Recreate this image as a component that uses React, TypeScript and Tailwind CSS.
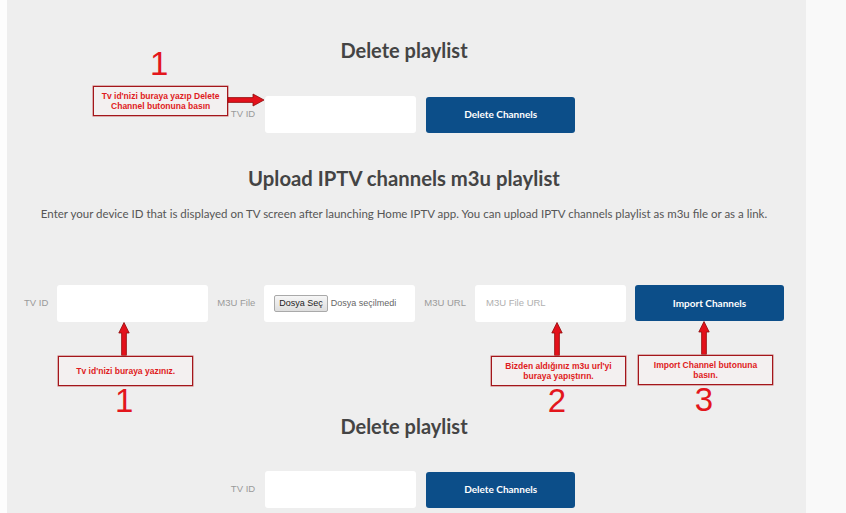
import type { ReactNode } from "react";

const lato = "font-['Lato','Noto_Sans',sans-serif]";
const arial = "font-['Liberation_Sans','Arial',sans-serif]";

function UpArrow() {
  return (
    <svg width="12" height="34" viewBox="0 0 12 34" className="block">
      <polygon points="6,0.5 11.2,11 8.4,11 8.4,33.5 3.6,33.5 3.6,11 0.8,11" fill="#e3111b" stroke="#8e0b0b" strokeWidth="0.8" />
    </svg>
  );
}

function RightArrow() {
  return (
    <svg width="37" height="14" viewBox="0 0 37 14" className="block">
      <polygon points="0,4.6 25,4.6 25,1 36,7 25,13 25,9.4 0,9.4" fill="#e3111b" stroke="#8e0b0b" strokeWidth="0.8" />
    </svg>
  );
}

function NoteBox({ children }: { children: ReactNode }) {
  return (
    <div className={`flex h-[30px] w-[135px] flex-col items-center justify-center border border-[#a3161b] bg-[#f3f0f0] text-center text-[8.5px] font-bold leading-[10px] text-[#df1b22] shadow-[0_0_0_0.5px_#c86a6a] ${arial}`}>
      {children}
    </div>
  );
}

function Digit({ n }: { n: string }) {
  return <div className={`text-[33px] leading-[28px] text-[#e3161c] ${arial}`}>{n}</div>;
}

function Callout({ n, left, children }: { n: string; left: string; children: ReactNode }) {
  return (
    <div className={`absolute top-full ${left} flex w-[135px] flex-col items-center pr-[3px]`}>
      <UpArrow />
      <div className="pl-[3px]">
        <NoteBox>{children}</NoteBox>
      </div>
      <div className="mt-[1px]">
        <Digit n={n} />
      </div>
    </div>
  );
}

function Label({ children }: { children: ReactNode }) {
  return <span className={`text-[9.5px] text-[#9a9a9a] ${arial}`}>{children}</span>;
}

function Input({ placeholder }: { placeholder?: string }) {
  return (
    <div className={`flex h-[37px] w-[151px] items-center rounded-[3px] bg-white pl-[11px] text-[9.5px] text-[#b0b0b0] ${arial}`}>
      {placeholder}
    </div>
  );
}

function BlueButton({ label }: { label: string }) {
  return (
    <div className={`flex h-[36px] w-[149px] items-center justify-center rounded-[3px] bg-[#0c4e89] text-[10px] font-bold text-white ${lato}`}>
      {label}
    </div>
  );
}

function Title({ children }: { children: ReactNode }) {
  return <h2 className={`text-center text-[20px] font-bold leading-6 text-[#444] ${lato}`}>{children}</h2>;
}

function DeleteRow({ note }: { note?: boolean }) {
  return (
    <div className="flex items-center justify-center gap-[10px] pr-[2px]">
      <Label>TV ID</Label>
      <div className="relative">
        <Input />
        {note && (
          <>
            <div className="absolute left-[-106px] top-[-48px] -translate-x-1/2">
              <div className={`text-[33px] leading-8 text-[#e3161c] ${arial}`}>1</div>
            </div>
            <div className="absolute left-[-172px] top-[-10px]">
              <NoteBox>
                <span>Tv id'nizi buraya yazıp Delete</span>
                <span>Channel butonuna basın</span>
              </NoteBox>
            </div>
            <div className="absolute left-[-37px] top-[-3px]">
              <RightArrow />
            </div>
          </>
        )}
      </div>
      <BlueButton label="Delete Channels" />
    </div>
  );
}

export default function App() {
  return (
    <div className="flex h-[513px] w-full overflow-hidden bg-[#f9f9f9]">
      <div className="w-[7px] bg-[#fdfdfd]" />
      <div className="flex w-[799px] flex-col bg-[#eeeeee] pr-[5px] pt-[38px]">
        <Title>Delete playlist</Title>
        <div className="mt-[34px]">
          <DeleteRow note />
        </div>

        <div className="mt-[33px]">
          <h2 className={`text-center text-[20.3px] font-bold leading-6 text-[#444] ${lato}`}>Upload IPTV channels m3u playlist</h2>
        </div>
        <p className={`mt-[16px] text-center text-[11.5px] leading-4 text-[#555] ${lato}`}>
          Enter your device ID that is displayed on TV screen after launching Home IPTV app. You can upload IPTV channels playlist as m3u file or as a link.
        </p>

        <div className="mt-[63px] flex h-[129px] items-start justify-center gap-[9px]">
          <div className="flex h-[37px] items-center">
            <Label>TV ID</Label>
          </div>
          <div className="relative">
            <Input />
            <Callout n="1" left="left-[1px]">
              <span>Tv id'nizi buraya yazınız.</span>
            </Callout>
          </div>
          <div className="flex h-[37px] items-center">
            <Label>M3U File</Label>
          </div>
          <div className={`flex h-[37px] w-[151px] items-center gap-[3px] rounded-[3px] bg-white pl-[10px] text-[9px] ${arial}`}>
            <span className="flex h-[17px] items-center rounded-[2px] border border-[#a9a9a9] bg-gradient-to-b from-[#f6f6f6] to-[#dedede] px-[4px] text-[#222]">
              Dosya Seç
            </span>
            <span className="text-[#666]">Dosya seçilmedi</span>
          </div>
          <div className="flex h-[37px] items-center">
            <Label>M3U URL</Label>
          </div>
          <div className="relative">
            <Input placeholder="M3U File URL" />
            <Callout n="2" left="left-[16px]">
              <span>Bizden aldığınız m3u url'yi</span>
              <span>buraya yapıştırın.</span>
            </Callout>
          </div>
          <div className="relative">
            <BlueButton label="Import Channels" />
            <Callout n="3" left="left-[3px]">
              <span>Import Channel butonuna</span>
              <span>basın.</span>
            </Callout>
          </div>
        </div>

        <Title>Delete playlist</Title>
        <div className="mt-[33px]">
          <DeleteRow />
        </div>
      </div>
    </div>
  );
}
